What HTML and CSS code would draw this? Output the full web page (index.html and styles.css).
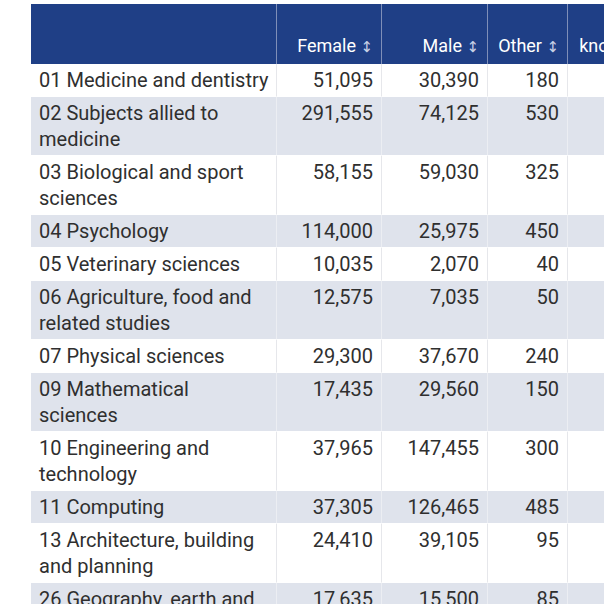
FILE: index.html
```html
<!DOCTYPE html>
<html lang="en">
<head>
<meta charset="utf-8">
<title>Subjects by sex</title>
<link rel="stylesheet" href="styles.css">
</head>
<body>
<div class="wrap">
<table class="data">
  <thead>
    <tr>
      <th class="c-subj"></th>
      <th class="c-num c-f">Female <span class="sort">↕</span></th>
      <th class="c-num c-m">Male <span class="sort">↕</span></th>
      <th class="c-num c-o">Other <span class="sort">↕</span></th>
      <th class="c-num c-n">Not known <span class="sort">↕</span></th>
    </tr>
  </thead>
  <tbody>
    <tr><td class="subj">01 Medicine and dentistry</td><td class="num">51,095</td><td class="num">30,390</td><td class="num">180</td><td class="num"></td></tr>
    <tr><td class="subj">02 Subjects allied to medicine</td><td class="num">291,555</td><td class="num">74,125</td><td class="num">530</td><td class="num"></td></tr>
    <tr><td class="subj">03 Biological and sport sciences</td><td class="num">58,155</td><td class="num">59,030</td><td class="num">325</td><td class="num"></td></tr>
    <tr><td class="subj">04 Psychology</td><td class="num">114,000</td><td class="num">25,975</td><td class="num">450</td><td class="num"></td></tr>
    <tr><td class="subj">05 Veterinary sciences</td><td class="num">10,035</td><td class="num">2,070</td><td class="num">40</td><td class="num"></td></tr>
    <tr><td class="subj">06 Agriculture, food and related studies</td><td class="num">12,575</td><td class="num">7,035</td><td class="num">50</td><td class="num"></td></tr>
    <tr><td class="subj">07 Physical sciences</td><td class="num">29,300</td><td class="num">37,670</td><td class="num">240</td><td class="num"></td></tr>
    <tr><td class="subj">09 Mathematical sciences</td><td class="num">17,435</td><td class="num">29,560</td><td class="num">150</td><td class="num"></td></tr>
    <tr><td class="subj">10 Engineering and technology</td><td class="num">37,965</td><td class="num">147,455</td><td class="num">300</td><td class="num"></td></tr>
    <tr><td class="subj">11 Computing</td><td class="num">37,305</td><td class="num">126,465</td><td class="num">485</td><td class="num"></td></tr>
    <tr><td class="subj">13 Architecture, building and planning</td><td class="num">24,410</td><td class="num">39,105</td><td class="num">95</td><td class="num"></td></tr>
    <tr><td class="subj">26 Geography, earth and environmental studies</td><td class="num">17,635</td><td class="num">15,500</td><td class="num">85</td><td class="num"></td></tr>
  </tbody>
</table>
</div>
</body>
</html>
```

FILE: styles.css
```css
html, body {
  margin: 0;
  padding: 0;
  background: #ffffff;
  overflow: hidden;
}

.wrap {
  padding: 4px 0 0 31px;
  overflow: hidden;
}

.data {
  border-collapse: separate;
  border-spacing: 0;
  table-layout: fixed;
  width: 627px;
  font-family: Roboto, "Liberation Sans", sans-serif;
  color: #2f2f2f;
}

.data th,
.data td {
  box-sizing: border-box;
  border-right: 1px solid #e6e7eb;
  border-bottom: 1px solid #ffffff;
}

.data th {
  background: #1f3f86;
  color: #ffffff;
  font-weight: 400;
  font-size: 18px;
  line-height: 22px;
  padding: 9px 8px 6px;
  vertical-align: bottom;
  text-align: right;
  border-right: 1px solid #7f8fb8;
  border-bottom: none;
}

.c-subj { width: 246px; }
.c-f { width: 105px; }
.c-m { width: 106px; }
.c-o { width: 80px; }
.c-n { width: 90px; }

.sort {
  font-family: "DejaVu Sans", sans-serif;
  font-size: 15px;
  color: #c9d1e6;
}

.data td {
  font-size: 20px;
  line-height: 26px;
  padding: 3px 8px 3px 8px;
  vertical-align: top;
}

.data td.subj {
  padding-right: 4px;
}

.data td.num {
  text-align: right;
}

.data tbody tr:nth-child(even) td {
  background: #dfe3ec;
  border-right-color: #eceef3;
}
```
